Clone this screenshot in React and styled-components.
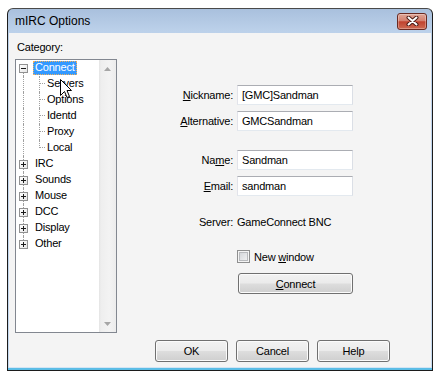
import React from "react";
import styled, { createGlobalStyle, css } from "styled-components";

const GlobalStyle = createGlobalStyle`
  html, body {
    margin: 0;
    background: #fff;
  }
  body {
    font-family: "Liberation Sans", Arial, sans-serif;
    font-size: 11px;
    letter-spacing: -0.2px;
    color: #000;
  }
`;

const Screen = styled.div`
  padding: 8px 0 0 7px;
`;

const Window = styled.div`
  width: 426px;
  height: 363px;
  box-sizing: border-box;
  display: flex;
  flex-direction: column;
  border: 1px solid #1c1c1c;
  border-top-color: #4a4a4a;
  border-radius: 6px 6px 0 0;
  overflow: hidden;
  background: linear-gradient(to top, #5bbde6 2px, transparent 2px),
    linear-gradient(#a9c0dd, #bcd1ea 22px, #c6daf0 100%);
`;

const TitleBar = styled.div`
  height: 24px;
  flex: none;
  display: flex;
  align-items: center;
  justify-content: space-between;
  padding: 0 5px 0 7px;
`;

const Title = styled.span`
  font-size: 12px;
  letter-spacing: 0;
  color: #000;
`;

const CloseButton = styled.div`
  width: 30px;
  height: 17px;
  box-sizing: border-box;
  border: 1px solid #6a2a22;
  border-radius: 3px;
  background: linear-gradient(#dfa597, #d4806f 45%, #c0432f 52%, #cd6a52 100%);
  box-shadow: inset 0 0 0 1px rgba(255, 255, 255, 0.3);
  display: flex;
  align-items: center;
  justify-content: center;
`;

const Body = styled.div`
  flex: 1;
  margin: 0 1px 2px;
  background: #f4f4f4;
  border-bottom: 1px solid #d3e5f4;
  display: flex;
  flex-direction: column;
  padding: 8px 0 5px 6px;
`;

const Main = styled.div`
  flex: 1;
  display: flex;
`;

const LeftColumn = styled.div`
  width: 102px;
  display: flex;
  flex-direction: column;
`;

const GroupLabel = styled.div`
  line-height: 13px;
  margin: 0 0 5px 2px;
`;

const TreeBox = styled.div`
  position: relative;
  height: 274px;
  box-sizing: border-box;
  border: 1px solid #828790;
  background: #fff;
  display: flex;
`;

const TreeList = styled.div`
  flex: 1;
`;

const Row = styled.div`
  height: 16px;
  display: flex;
  align-items: center;
`;

const Guide = styled.span`
  position: relative;
  flex: none;
  align-self: stretch;
  width: ${(p) => p.$w}px;
  display: flex;
  align-items: center;
  padding-left: ${(p) => (p.$pad ? 3 : 0)}px;
  box-sizing: border-box;

  &::before {
    content: "";
    display: ${(p) => (p.$v ? "block" : "none")};
    position: absolute;
    left: ${(p) => p.$x}px;
    top: ${(p) => (p.$v === "down" ? "8px" : "0")};
    bottom: ${(p) => (p.$v === "up" ? "8px" : "0")};
    border-left: 1px dotted #a0a0a0;
  }

  &::after {
    content: "";
    display: ${(p) => (p.$h ? "block" : "none")};
    position: absolute;
    left: ${(p) => p.$x}px;
    right: 0;
    top: 7px;
    border-top: 1px dotted #a0a0a0;
  }
`;

const Expander = styled.span`
  position: relative;
  z-index: 1;
  width: 9px;
  height: 9px;
  box-sizing: border-box;
  border: 1px solid #919191;
  background: linear-gradient(135deg, #fff, #e6e6e6);

  &::before {
    content: "";
    position: absolute;
    left: 1px;
    top: 3px;
    width: 5px;
    height: 1px;
    background: #1a1a1a;
  }

  &::after {
    content: "";
    display: ${(p) => (p.$open ? "none" : "block")};
    position: absolute;
    left: 3px;
    top: 1px;
    width: 1px;
    height: 5px;
    background: #1a1a1a;
  }
`;

const NodeLabel = styled.span`
  height: 14px;
  line-height: 13px;
  padding: 0 2px;
  white-space: nowrap;
  ${(p) =>
    p.$selected &&
    css`
      background: #3399ff;
      color: #fff;
      outline: 1px dotted #f3b05a;
      outline-offset: -1px;
    `}
`;

const Scrollbar = styled.div`
  width: 17px;
  flex: none;
  display: flex;
  flex-direction: column;
  justify-content: space-between;
  background: linear-gradient(to right, #e4e4e4, #eeeeee 2px, #f3f3f3 60%, #ececec);
`;

const ScrollArrow = styled.div`
  height: 17px;
  display: flex;
  align-items: center;
  justify-content: center;
`;

const Cursor = styled.svg`
  position: absolute;
  left: 44px;
  top: 19px;
`;

const Form = styled.div`
  display: flex;
  flex-direction: column;
  padding-top: 44px;
`;

const FieldRow = styled.div`
  display: grid;
  grid-template-columns: 116px 116px;
  column-gap: 4px;
  align-items: center;
  min-height: ${(p) => p.$h || 20}px;
  margin-top: ${(p) => p.$gap || 0}px;
`;

const FieldLabel = styled.span`
  text-align: right;
  white-space: nowrap;
`;

const TextBox = styled.input`
  width: 116px;
  height: 20px;
  box-sizing: border-box;
  border: 1px solid;
  border-color: #abadb3 #dbdfe6 #e3e9ef #e2e3ea;
  padding: 0 4px;
  background: #fff;
  font: inherit;
  letter-spacing: inherit;
  color: #000;
  outline: none;
`;

const CheckLine = styled.label`
  grid-column: 2;
  display: flex;
  align-items: center;
  gap: 4px;
  white-space: nowrap;
`;

const CheckBox = styled.span`
  width: 13px;
  height: 13px;
  box-sizing: border-box;
  border: 1px solid #8e8f8f;
  background: linear-gradient(135deg, #cdd0d4, #f7f7f7);
  box-shadow: inset 0 0 0 1px #f4f4f4, inset 0 0 0 2px #b8babd;
`;

const Button = styled.button`
  width: ${(p) => p.$w}px;
  height: ${(p) => p.$h}px;
  box-sizing: border-box;
  border: 1px solid #707070;
  border-radius: 3px;
  background: linear-gradient(#f2f2f2 0%, #ebebeb 48%, #dddddd 52%, #cfcfcf 100%);
  box-shadow: inset 0 0 0 1px #fbfbfb;
  font: inherit;
  letter-spacing: inherit;
  color: #000;
  padding: 0;
  ${(p) => p.$col && css`grid-column: ${p.$col}; margin-left: 1px;`}
`;

const Footer = styled.div`
  display: flex;
  justify-content: flex-end;
  gap: 8px;
  margin-top: 7px;
  padding-right: 41px;
`;

const children = ["Servers", "Options", "Identd", "Proxy", "Local"];
const others = ["IRC", "Sounds", "Mouse", "DCC", "Display", "Other"];

const Arrow = ({ down }) => (
  <svg width="7" height="4" viewBox="0 0 7 4">
    <path d={down ? "M0 0H7L3.5 4Z" : "M0 4H7L3.5 0Z"} fill="#a6a6a6" />
  </svg>
);

const Tree = () => (
  <TreeBox>
    <TreeList>
      <Row>
        <Guide $w={17} $x={7} $v="down" $pad>
          <Expander $open />
        </Guide>
        <NodeLabel $selected>Connect</NodeLabel>
      </Row>
      {children.map((name, i) => (
        <Row key={name}>
          <Guide $w={17} $x={7} $v="full" />
          <Guide $w={12} $x={6} $v={i === children.length - 1 ? "up" : "full"} $h />
          <NodeLabel>{name}</NodeLabel>
        </Row>
      ))}
      {others.map((name, i) => (
        <Row key={name}>
          <Guide $w={17} $x={7} $v={i === others.length - 1 ? "up" : "full"} $pad>
            <Expander />
          </Guide>
          <NodeLabel>{name}</NodeLabel>
        </Row>
      ))}
    </TreeList>
    <Scrollbar>
      <ScrollArrow>
        <Arrow />
      </ScrollArrow>
      <ScrollArrow>
        <Arrow down />
      </ScrollArrow>
    </Scrollbar>
    <Cursor width="12" height="19" viewBox="0 0 12 19">
      <path
        d="M0.5 0.5V16.5L4.5 12.5L7 18.5L9.5 17.5L7 11.5H11.5Z"
        fill="#fff"
        stroke="#000"
        strokeLinejoin="round"
      />
    </Cursor>
  </TreeBox>
);

const App = () => (
  <Screen>
    <GlobalStyle />
    <Window>
      <TitleBar>
        <Title>mIRC Options</Title>
        <CloseButton>
          <svg width="13" height="10" viewBox="0 0 13 10">
            <path d="M2.5 1.5L10.5 8.5M10.5 1.5L2.5 8.5" stroke="#4a1a14" strokeWidth="4" strokeLinecap="round" />
            <path d="M2.5 1.5L10.5 8.5M10.5 1.5L2.5 8.5" stroke="#fff" strokeWidth="2" strokeLinecap="round" />
          </svg>
        </CloseButton>
      </TitleBar>
      <Body>
        <Main>
          <LeftColumn>
            <GroupLabel>Category:</GroupLabel>
            <Tree />
          </LeftColumn>
          <Form>
            <FieldRow>
              <FieldLabel>
                <u>N</u>ickname:
              </FieldLabel>
              <TextBox value="[GMC]Sandman" readOnly />
            </FieldRow>
            <FieldRow $gap={6}>
              <FieldLabel>
                <u>A</u>lternative:
              </FieldLabel>
              <TextBox value="GMCSandman" readOnly />
            </FieldRow>
            <FieldRow $gap={19}>
              <FieldLabel>
                Na<u>m</u>e:
              </FieldLabel>
              <TextBox value="Sandman" readOnly />
            </FieldRow>
            <FieldRow $gap={6}>
              <FieldLabel>
                <u>E</u>mail:
              </FieldLabel>
              <TextBox value="sandman" readOnly />
            </FieldRow>
            <FieldRow $gap={16}>
              <FieldLabel>Server:</FieldLabel>
              <span>GameConnect BNC</span>
            </FieldRow>
            <FieldRow $gap={18} $h={13}>
              <CheckLine>
                <CheckBox />
                <span>
                  New <u>w</u>indow
                </span>
              </CheckLine>
            </FieldRow>
            <FieldRow $gap={10} $h={21}>
              <Button $w={115} $h={21} $col={2}>
                <u>C</u>onnect
              </Button>
            </FieldRow>
          </Form>
        </Main>
        <Footer>
          <Button $w={73} $h={22}>OK</Button>
          <Button $w={73} $h={22}>Cancel</Button>
          <Button $w={73} $h={22}>Help</Button>
        </Footer>
      </Body>
    </Window>
  </Screen>
);

export default App;
